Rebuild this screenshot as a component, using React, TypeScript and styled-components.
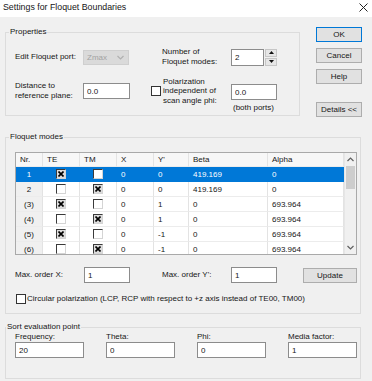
import React from 'react'
import styled, { createGlobalStyle } from 'styled-components'

const GlobalStyle = createGlobalStyle`
  html, body {
    margin: 0;
    padding: 0;
    background: #f0f0f0;
  }

  body {
    font-family: "Liberation Sans", Arial, sans-serif;
    font-size: 8px;
    color: #161616;
  }

  * {
    box-sizing: border-box;
  }
`

const Window = styled.div`
  width: 372px;
  height: 381px;
  overflow: hidden;
  background: #f0f0f0;
  display: flex;
  flex-direction: column;
`

const TitleBar = styled.div`
  height: 17px;
  flex: none;
  background: #fff;
  display: flex;
  align-items: center;
  justify-content: space-between;
  padding: 0 4px 3px 3px;
  font-size: 8.8px;

  svg {
    stroke: #222;
  }
`

const Main = styled.div`
  padding-top: 10px;
  display: flex;
  flex-direction: column;
`

const TopRow = styled.div`
  display: flex;
  align-items: flex-start;
  padding-left: 5px;
`

const GroupBox = styled.section`
  position: relative;
  border: 1px solid #dcdcdc;
`

const GroupLabel = styled.span<{ $inset: number }>`
  position: absolute;
  top: -6px;
  left: ${(p) => p.$inset}px;
  padding: 0 1px;
  line-height: 10px;
  background: #f0f0f0;
  white-space: nowrap;
`

const PropertiesBox = styled(GroupBox)`
  width: 295px;
  margin-top: 5px;
  padding: 14px 0 9px 9px;
`

const PropsGrid = styled.div`
  display: grid;
  grid-template-columns: 68px 47px 101px 46px;
  grid-template-rows: 20px 30px;
  row-gap: 9px;
  align-items: center;
`

const Label = styled.span<{ $indent?: number; $lh?: number }>`
  display: block;
  line-height: ${(p) => p.$lh ?? 10}px;
  padding-left: ${(p) => p.$indent ?? 0}px;
  white-space: nowrap;
`

const TextBox = styled.input<{ $w: number; $h?: number }>`
  width: ${(p) => p.$w}px;
  height: ${(p) => p.$h ?? 16}px;
  margin: 0;
  padding: 0 3px;
  border: 1px solid #8c8c8c;
  background: #fff;
  font: inherit;
  color: inherit;
  outline: none;
`

const Combo = styled.div`
  width: 46px;
  height: 15px;
  display: flex;
  align-items: center;
  justify-content: space-between;
  padding: 0 4px 0 3px;
  border: 1px solid #cfcfcf;
  background: #dadada;
  color: #a3a3a3;

  svg {
    stroke: #b0b0b0;
  }
`

const Spin = styled.div`
  display: flex;
  align-items: center;
  gap: 1px;
`

const SpinButtons = styled.div`
  display: flex;
  flex-direction: column;
  gap: 1px;
`

const SpinButton = styled.div`
  width: 12px;
  height: 8px;
  display: flex;
  align-items: center;
  justify-content: center;
  background: #e6e6e6;
  border: 1px solid #c6c6c6;

  svg {
    fill: #111;
  }
`

const CheckBox = styled.span`
  flex: none;
  width: 10px;
  height: 10px;
  border: 1px solid #333;
  background: #fff;
`

const CheckLabel = styled.div<{ $indent?: number }>`
  display: flex;
  align-items: center;
  gap: 2px;
  padding-left: ${(p) => p.$indent ?? 0}px;
`

const FieldStack = styled.div`
  align-self: start;
  margin-top: 8px;
  display: flex;
  flex-direction: column;
  gap: 3px;
`

const Caption = styled.span`
  line-height: 10px;
  padding-left: 2px;
  white-space: nowrap;
`

const ButtonColumn = styled.div`
  margin-left: 16px;
  width: 46px;
  display: flex;
  flex-direction: column;
  gap: 6px;
`

const Button = styled.button<{ $primary?: boolean; $w?: number; $gapTop?: number }>`
  width: ${(p) => p.$w ?? 46}px;
  height: 15px;
  margin: ${(p) => p.$gapTop ?? 0}px 0 0 0;
  padding: 0;
  border: 1px solid ${(p) => (p.$primary ? '#0078d7' : '#adadad')};
  background: #e1e1e1;
  font: inherit;
  color: inherit;
  line-height: 13px;
`

const FloquetBox = styled(GroupBox)`
  width: 356px;
  margin: 20px 0 0 5px;
  padding: 14px 0 9px 9px;
`

const TableFrame = styled.div`
  width: 342px;
  height: 103px;
  display: flex;
  border: 1px solid #a9a9a9;
  background: #fff;
`

const Grid = styled.div`
  width: 328px;
  overflow: hidden;
`

const Row = styled.div<{ $head?: boolean; $selected?: boolean }>`
  display: grid;
  grid-template-columns: 27px 37px 37px 37px 35px 79px 76px;
  height: ${(p) => (p.$head ? 14 : 15)}px;
  background: ${(p) => (p.$head ? '#f7f7f7' : p.$selected ? '#0078d7' : '#fff')};
  color: ${(p) => (p.$selected ? '#fff' : 'inherit')};
`

const Cell = styled.div<{ $center?: boolean; $shade?: boolean; $sel?: boolean }>`
  display: flex;
  align-items: center;
  justify-content: ${(p) => (p.$center ? 'center' : 'flex-start')};
  padding-left: ${(p) => (p.$center ? 0 : 4)}px;
  border-right: 1px solid ${(p) => (p.$sel ? '#0078d7' : '#e3e3e3')};
  border-bottom: 1px solid ${(p) => (p.$sel ? '#0078d7' : '#ececec')};
  background: ${(p) => (p.$shade && !p.$sel ? '#f0f0f0' : 'transparent')};
  white-space: nowrap;
`

const GridCheck = styled.span<{ $checked: boolean }>`
  width: 10px;
  height: 10px;
  display: flex;
  align-items: center;
  justify-content: center;
  background: ${(p) => (p.$checked ? '#dcdcdc' : '#fff')};
  border-top: 1px solid #3a3a3a;
  border-left: 1px solid #3a3a3a;
  border-right: 1px solid #d4d4d4;
  border-bottom: 1px solid #d4d4d4;

  svg {
    stroke: #000;
  }
`

const ScrollBar = styled.div`
  width: 12px;
  display: flex;
  flex-direction: column;
  background: #f0f0f0;
  border-left: 1px solid #e6e6e6;

  svg {
    stroke: #606060;
  }
`

const ScrollArrow = styled.div`
  height: 13px;
  flex: none;
  display: flex;
  align-items: center;
  justify-content: center;
`

const ScrollTrack = styled.div`
  flex: 1;
`

const Thumb = styled.div`
  height: 23px;
  margin: 0 1px;
  background: #cdcdcd;
`

const OrderRow = styled.div`
  display: grid;
  grid-template-columns: 69px 46px 32px 69px 46px 26px 54px;
  align-items: center;
  margin-top: 12px;
`

const CircularRow = styled(CheckLabel)`
  margin-top: 11px;
  padding-left: 1px;
  gap: 1px;
`

const SortBox = styled(GroupBox)`
  width: 356px;
  margin: 13px 0 0 5px;
  padding: 4px 0 20px 9px;
`

const SortGrid = styled.div`
  display: grid;
  grid-template-columns: repeat(4, 69px);
  grid-template-rows: 9px 16px;
  column-gap: 22px;
  row-gap: 1px;
  line-height: 9px;
`

const CloseIcon = () => (
  <svg width="9" height="9" viewBox="0 0 9 9" fill="none" strokeWidth="1">
    <path d="M0.5 0.5 L8.5 8.5 M8.5 0.5 L0.5 8.5" />
  </svg>
)

const Chevron = ({ up }: { up?: boolean }) => (
  <svg width="7" height="5" viewBox="0 0 7 5" fill="none" strokeWidth="1.2">
    <polyline points={up ? '0.5,4 3.5,1 6.5,4' : '0.5,1 3.5,4 6.5,1'} />
  </svg>
)

const Triangle = ({ up }: { up?: boolean }) => (
  <svg width="5" height="3" viewBox="0 0 5 3">
    <polygon points={up ? '0,3 2.5,0 5,3' : '0,0 5,0 2.5,3'} />
  </svg>
)

const XMark = () => (
  <svg width="6" height="6" viewBox="0 0 6 6" fill="none" strokeWidth="1.6">
    <path d="M0.5 0.5 L5.5 5.5 M5.5 0.5 L0.5 5.5" />
  </svg>
)

interface Mode {
  nr: string
  te: boolean
  tm: boolean
  x: string
  y: string
  beta: string
  alpha: string
}

const modes: Mode[] = [
  { nr: '1', te: true, tm: false, x: '0', y: '0', beta: '419.169', alpha: '0' },
  { nr: '2', te: false, tm: true, x: '0', y: '0', beta: '419.169', alpha: '0' },
  { nr: '(3)', te: true, tm: false, x: '0', y: '1', beta: '0', alpha: '693.964' },
  { nr: '(4)', te: false, tm: true, x: '0', y: '1', beta: '0', alpha: '693.964' },
  { nr: '(5)', te: true, tm: false, x: '0', y: '-1', beta: '0', alpha: '693.964' },
  { nr: '(6)', te: false, tm: true, x: '0', y: '-1', beta: '0', alpha: '693.964' },
]

const headers = ['Nr.', 'TE', 'TM', 'X', "Y'", 'Beta', 'Alpha']

const ModeRow: React.FC<{ mode: Mode; selected: boolean }> = ({ mode, selected }) => (
  <Row $selected={selected}>
    <Cell $center $shade $sel={selected}>{mode.nr}</Cell>
    <Cell $center $sel={selected}>
      <GridCheck $checked={mode.te}>{mode.te ? <XMark /> : null}</GridCheck>
    </Cell>
    <Cell $center $sel={selected}>
      <GridCheck $checked={mode.tm}>{mode.tm ? <XMark /> : null}</GridCheck>
    </Cell>
    <Cell $sel={selected}>{mode.x}</Cell>
    <Cell $sel={selected}>{mode.y}</Cell>
    <Cell $sel={selected}>{mode.beta}</Cell>
    <Cell $sel={selected}>{mode.alpha}</Cell>
  </Row>
)

const sortFields = [
  { label: 'Frequency:', value: '20' },
  { label: 'Theta:', value: '0' },
  { label: 'Phi:', value: '0' },
  { label: 'Media factor:', value: '1' },
]

const App: React.FC = () => {
  return (
    <Window>
      <GlobalStyle />
      <TitleBar>
        <span>Settings for Floquet Boundaries</span>
        <CloseIcon />
      </TitleBar>

      <Main>
        <TopRow>
          <PropertiesBox>
            <GroupLabel $inset={3}>Properties</GroupLabel>
            <PropsGrid>
              <Label>Edit Floquet port:</Label>
              <Combo>
                <span>Zmax</span>
                <Chevron />
              </Combo>
              <Label $indent={32}>
                Number of
                <br />
                Floquet modes:
              </Label>
              <Spin>
                <TextBox $w={33} $h={17} readOnly value="2" />
                <SpinButtons>
                  <SpinButton>
                    <Triangle up />
                  </SpinButton>
                  <SpinButton>
                    <Triangle />
                  </SpinButton>
                </SpinButtons>
              </Spin>

              <Label>
                Distance to
                <br />
                reference plane:
              </Label>
              <TextBox $w={47} readOnly value="0.0" />
              <CheckLabel $indent={21}>
                <CheckBox />
                <Label $lh={9.5}>
                  Polarization
                  <br />
                  independent of
                  <br />
                  scan angle phi:
                </Label>
              </CheckLabel>
              <FieldStack>
                <TextBox $w={46} readOnly value="0.0" />
                <Caption>(both ports)</Caption>
              </FieldStack>
            </PropsGrid>
          </PropertiesBox>

          <ButtonColumn>
            <Button $primary>OK</Button>
            <Button>Cancel</Button>
            <Button>Help</Button>
            <Button $gapTop={12}>Details &lt;&lt;</Button>
          </ButtonColumn>
        </TopRow>

        <FloquetBox>
          <GroupLabel $inset={3}>Floquet modes</GroupLabel>
          <TableFrame>
            <Grid>
              <Row $head>
                {headers.map((h) => (
                  <Cell key={h}>{h}</Cell>
                ))}
              </Row>
              {modes.map((m, i) => (
                <ModeRow key={m.nr} mode={m} selected={i === 0} />
              ))}
            </Grid>
            <ScrollBar>
              <ScrollArrow>
                <Chevron up />
              </ScrollArrow>
              <ScrollTrack>
                <Thumb />
              </ScrollTrack>
              <ScrollArrow>
                <Chevron />
              </ScrollArrow>
            </ScrollBar>
          </TableFrame>

          <OrderRow>
            <Label>Max. order X:</Label>
            <TextBox $w={46} readOnly value="1" />
            <span />
            <Label>Max. order Y':</Label>
            <TextBox $w={46} readOnly value="1" />
            <span />
            <Button $w={54}>Update</Button>
          </OrderRow>

          <CircularRow>
            <CheckBox />
            <Label>Circular polarization (LCP, RCP with respect to +z axis instead of TE00, TM00)</Label>
          </CircularRow>
        </FloquetBox>

        <SortBox>
          <GroupLabel $inset={0}>Sort evaluation point</GroupLabel>
          <SortGrid>
            {sortFields.map((f) => (
              <Label key={f.label} $lh={9}>
                {f.label}
              </Label>
            ))}
            {sortFields.map((f) => (
              <TextBox key={f.label} $w={69} readOnly value={f.value} />
            ))}
          </SortGrid>
        </SortBox>
      </Main>
    </Window>
  )
}

export default App
